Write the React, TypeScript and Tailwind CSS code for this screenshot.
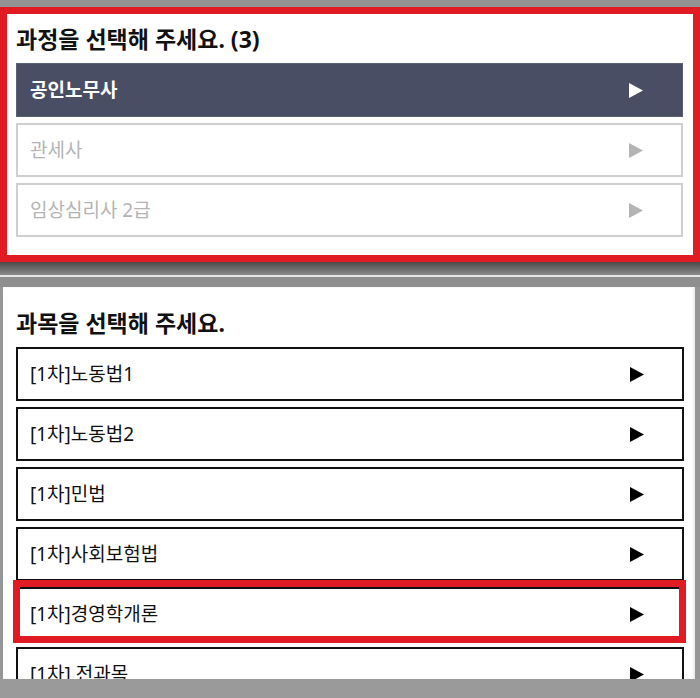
import React from "react";

const font = { fontFamily: '"Noto Sans", "Noto Sans CJK KR", sans-serif' };

function Tri({ color }: { color: string }) {
  return (
    <svg width="14" height="15" viewBox="0 0 14 15" className="shrink-0">
      <polygon points="0,0 14,7.5 0,15" fill={color} />
    </svg>
  );
}

const courses = [
  { name: "공인노무사", active: true },
  { name: "관세사", active: false },
  { name: "임상심리사 2급", active: false },
];

const subjects = [
  "[1차]노동법1",
  "[1차]노동법2",
  "[1차]민법",
  "[1차]사회보험법",
  "[1차]경영학개론",
  "[1차] 전과목",
];

export default function App() {
  return (
    <div className="w-[700px] h-[698px] bg-[#969696] overflow-hidden flex flex-col" style={font}>
      <div className="h-[7px] bg-[#939393] shrink-0" />
      <div className="h-[255px] shrink-0 border-[7px] border-[#e01b24] bg-white flex flex-col pl-[9px] pr-[10px] pt-[11px]">
        <div className="text-[23px] leading-[28px] font-bold text-[#111]">과정을 선택해 주세요. (3)</div>
        <div className="mt-[10px] flex flex-col gap-[6px]">
          {courses.map((c) =>
            c.active ? (
              <div key={c.name} className="h-[54px] bg-[#4a4e65] border border-[#5c6075] flex items-center justify-between pl-[13px] pr-[39px]">
                <span className="text-[19px] font-bold text-white">{c.name}</span>
                <Tri color="#ffffff" />
              </div>
            ) : (
              <div key={c.name} className="h-[54px] bg-white border-2 border-[#cfcfcf] flex items-center justify-between pl-[12px] pr-[38px]">
                <span className="text-[19px] text-[#b4b4b4]">{c.name}</span>
                <Tri color="#b4b4b4" />
              </div>
            )
          )}
        </div>
      </div>
      <div className="h-[13px] shrink-0 bg-gradient-to-b from-[#4a4a4a] to-[#8c8c8c]" />
      <div className="h-[2px] shrink-0 bg-[#e6e6e6]" />
      <div className="h-[10px] shrink-0 bg-[#8f8f8f]" />
      <div className="ml-[3px] w-[692px] h-[392px] shrink-0 bg-white overflow-hidden flex flex-col pl-[13px] pr-[11px] pt-[22px] shadow-[inset_-2px_0_2px_rgba(0,0,0,0.08)]">
        <div className="text-[23px] leading-[28px] font-bold text-[#111]">과목을 선택해 주세요.</div>
        <div className="mt-[10px] flex flex-col gap-[6px]">
          {subjects.map((s, i) => (
            <div key={s} className="relative h-[54px] shrink-0 bg-white border-2 border-[#111] flex items-center justify-between pl-[12px] pr-[38px]">
              <span className="text-[19px] text-[#111]">{s}</span>
              <Tri color="#000000" />
              {i === 4 && (
                <div className="absolute top-[-9px] left-[-5px] right-[-4px] bottom-[-4px] border-[7px] border-[#e01b24] pointer-events-none" />
              )}
            </div>
          ))}
        </div>
      </div>
      <div className="flex-1 bg-[#9a9a9a]" />
    </div>
  );
}
